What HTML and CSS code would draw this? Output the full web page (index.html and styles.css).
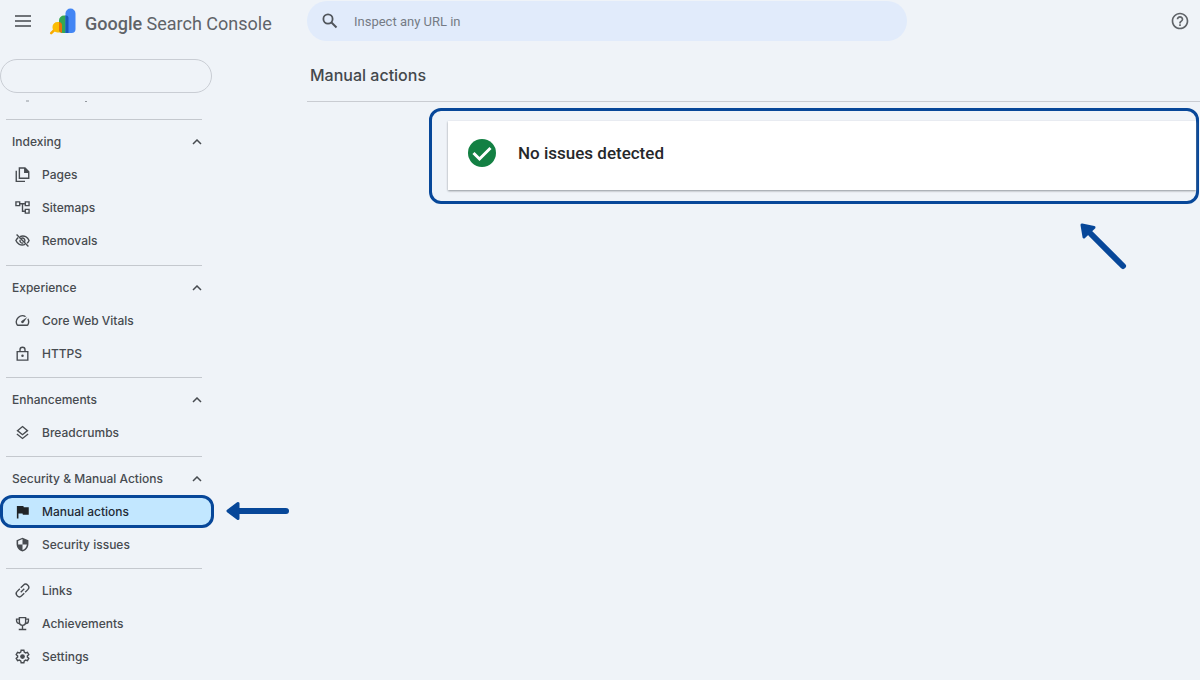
FILE: index.html
```html
<!DOCTYPE html>
<html lang="en">
<head>
<meta charset="utf-8">
<title>Google Search Console</title>
<link rel="stylesheet" href="styles.css">
</head>
<body>
<header class="topbar">
  <div class="brand">
    <button class="icon-button" aria-label="Main menu"><svg class="menu-icon" viewBox="0 0 16 12"><path d="M0 1h16M0 6h16M0 11h16" stroke="#45494d" stroke-width="1.700"/></svg></button>
    <svg class="logo" viewBox="0 0 28 28">
      <path d="M2.200 25.200L8 19.500" stroke="#f9ab00" stroke-width="2.500" stroke-linecap="round"/>
      <path d="M3.500 19a5 5 0 0 1 5-5H13V24.500H8.500a5 5 0 0 1-5-5z" fill="#fbbc04"/>
      <path d="M10 12.500A5 5 0 0 1 15 7.500h3V25h-4a4 4 0 0 1-4-4z" fill="#34a853"/>
      <path d="M10 14c1.800 0 3 1.500 3 3.500v7.400a4 4 0 0 1-3-3.900z" fill="#e8710a"/>
      <path d="M16.500 5.500a5 5 0 0 1 10 0V21a4 4 0 0 1-4 4h-6z" fill="#4285f4"/>
      <path d="M16.500 7.500H17a2.500 2.500 0 0 1 2.500 2.500v15h-3z" fill="#185abc"/>
    </svg>
    <span class="brand-name"><span class="brand-strong">Google</span> Search Console</span>
  </div>
  <label class="search">
    <svg class="search-icon" viewBox="0 0 16 16"><circle cx="6" cy="6" r="4.600" fill="none" stroke="#50555b" stroke-width="1.800"/><path d="M9.500 9.500l5 5" stroke="#50555b" stroke-width="2"/></svg>
    <input class="search-input" type="text" placeholder="Inspect any URL in" aria-label="Inspect any URL">
  </label>
  <button class="icon-button help" aria-label="Help"><svg class="help-icon" viewBox="0 0 24 24"><path fill="#5f6368" d="M11 18h2v-2h-2v2zm1-16C6.480 2 2 6.480 2 12s4.480 10 10 10 10-4.480 10-10S17.520 2 12 2zm0 18c-4.410 0-8-3.590-8-8s3.590-8 8-8 8 3.590 8 8-3.590 8-8 8zm0-14c-2.210 0-4 1.790-4 4h2c0-1.100.9-2 2-2s2 .9 2 2c0 2-3 1.750-3 5h2c0-2.250 3-2.500 3-5 0-2.210-1.790-4-4-4z"/></svg></button>
</header>
<div class="layout">
  <nav class="sidebar" aria-label="Reports">
    <button class="property" aria-label="Select property"></button>
    <svg class="scrolled-edge" viewBox="0 0 100 3" aria-hidden="true"><path d="M26 1h3M85 1.500h2" stroke="#92979d" stroke-width="1.200"/></svg>

    <section class="group">
      <button class="group-title">Indexing<svg class="chevron" viewBox="0 0 10 6"><path d="M1 5l4-4 4 4"/></svg></button>
      <a class="item" href="#"><svg class="icon" viewBox="0 0 24 24"><path class="line" d="M7 1.500h9l6 6V18H7zM2 6v17h14"/><path d="M14.500 1.500h2l5.500 5.500v2.500h-7.500z"/></svg>Pages</a>
      <a class="item" href="#"><svg class="icon" viewBox="0 0 24 24"><path class="line" d="M1.500 3h6v6h-6zM16.500 3h6v6h-6zM16.500 15h6v6h-6zM7.500 6h9M12 6v12h4.500"/></svg>Sitemaps</a>
      <a class="item" href="#"><svg class="icon" viewBox="0 0 24 24"><path class="line" d="M8 5.800C15 3 20.500 7 22.500 12c-.8 1.800-1.800 3.200-3.200 4.400M16 18.200C9 21 3.500 17 1.500 12c.8-1.800 1.800-3.200 3.500-4.600M2.500 2.500l19 19M10 8.600a4 4 0 0 1 5.500 5.200M8.100 11a4 4 0 0 0 5 5"/></svg>Removals</a>
    </section>

    <section class="group">
      <button class="group-title">Experience<svg class="chevron" viewBox="0 0 10 6"><path d="M1 5l4-4 4 4"/></svg></button>
      <a class="item" href="#"><svg class="icon" viewBox="1 1 22 22"><path d="M20.380 8.570l-1.230 1.850a8 8 0 0 1-.22 7.580H5.070A8 8 0 0 1 15.580 6.850l1.850-1.230A10 10 0 0 0 3.350 19a2 2 0 0 0 1.720 1h13.850a2 2 0 0 0 1.740-1 10 10 0 0 0-.27-10.440zm-9.790 6.840a2 2 0 0 0 2.830 0l5.660-8.490-8.490 5.660a2 2 0 0 0 0 2.830z"/></svg>Core Web Vitals</a>
      <a class="item" href="#"><svg class="icon" viewBox="0 0 24 24"><path class="line" d="M3.500 9h17v13.500h-17zM8 9V6a4 4 0 0 1 8 0v3"/><circle cx="12" cy="15.500" r="2"/></svg>HTTPS</a>
    </section>

    <section class="group">
      <button class="group-title">Enhancements<svg class="chevron" viewBox="0 0 10 6"><path d="M1 5l4-4 4 4"/></svg></button>
      <a class="item" href="#"><svg class="icon" viewBox="0 0 24 24"><path class="line" d="M12 2.500l8 6.500-8 6.500L4 9zM3 14.500l9 7 9-7"/></svg>Breadcrumbs</a>
    </section>

    <section class="group">
      <button class="group-title">Security &amp; Manual Actions<svg class="chevron" viewBox="0 0 10 6"><path d="M1 5l4-4 4 4"/></svg></button>
      <a class="item current" href="#" aria-current="page"><svg class="icon" viewBox="0 0 24 24"><path d="M14 5l-.6-2H3v20h2.500v-8H12l.6 2H22V5z"/></svg>Manual actions<svg class="arrow arrow-left" viewBox="0 0 64 20"><path d="M12 10h48" stroke="#074799" stroke-width="6" stroke-linecap="round"/><path d="M2 10L12 2.500v15z" fill="#074799" stroke="#074799" stroke-width="3" stroke-linejoin="round"/></svg></a>
      <a class="item" href="#"><svg class="icon" viewBox="0 0 24 24"><path d="M12 1L2.500 5v6c0 5.550 4 10.740 9.500 12 5.500-1.260 9.500-6.450 9.500-12V5L12 1zm0 11h7c-.53 4.120-3.280 7.790-7 8.940V12H5V6.300l7-3.110V12z"/></svg>Security issues</a>
    </section>

    <section class="group">
      <a class="item" href="#"><svg class="icon" viewBox="0 0 24 24"><g transform="rotate(-45 12 12)"><path class="line" d="M11 7H5a5 5 0 0 0 0 10h6M13 7h6a5 5 0 0 1 0 10h-6M8 12h8"/></g></svg>Links</a>
      <a class="item" href="#"><svg class="icon" viewBox="0 0 24 24"><path class="line" d="M7 2.500h10V10a5 5 0 0 1-10 0zM7 5H2.500v2.500A4.500 4.500 0 0 0 7 12M17 5h4.500v2.500A4.500 4.500 0 0 1 17 12M12 15v6M6 21.500h12"/></svg>Achievements</a>
      <a class="item" href="#"><svg class="icon" viewBox="0 0 24 24"><path class="line" d="M9.800 2h4.400l.6 3 2.200 1.300 2.900-1 2.200 3.800-2.300 2v1.800l2.300 2-2.200 3.800-2.900-1-2.200 1.300-.6 3H9.800l-.6-3L7 17.700l-2.900 1-2.200-3.800 2.300-2v-1.800l-2.300-2 2.200-3.800 2.900 1L9.200 5z"/><circle cx="12" cy="12" r="3.800"/></svg>Settings</a>
    </section>
  </nav>

  <main class="content">
    <h1 class="page-title">Manual actions</h1>
    <div class="callout">
      <div class="card">
        <svg class="check" viewBox="0 0 28 28"><circle cx="14" cy="14" r="14" fill="#138043"/><path d="M5.500 14l6 6L22.500 9" fill="none" stroke="#fff" stroke-width="3"/></svg>
        <p class="status">No issues detected</p>
      </div>
      <svg class="arrow arrow-up" viewBox="0 0 48 48"><path d="M12 12l32 32" stroke="#074799" stroke-width="6" stroke-linecap="round"/><path d="M3 3l12 2.500L5 15z" fill="#074799" stroke="#074799" stroke-width="3" stroke-linejoin="round"/></svg>
    </div>
  </main>
</div>
</body>
</html>
```
FILE: styles.css
```css
* { box-sizing: border-box; }
body {
  margin: 0;
  background: #eff3f8;
  color: #474b50;
  font-family: Inter, "Liberation Sans", sans-serif;
  font-size: 12px;
  overflow-x: hidden;
}
button { font: inherit; color: inherit; background: none; border: 0; padding: 0; }

.topbar {
  display: grid;
  grid-template-columns: 307px minmax(0, 600px) 1fr;
  align-items: center;
  height: 42px;
}
.brand { display: flex; align-items: center; padding-left: 15px; }
.icon-button { display: flex; }
.menu-icon { width: 16px; height: 12px; }
.logo { width: 28px; height: 28px; margin: 2px 0 0 18px; }
.brand-name {
  margin: 5px 0 0 8px;
  font: 400 18px Roboto, sans-serif;
  color: #5f6368;
  white-space: nowrap;
}
.brand-strong { font-weight: 500; }
.search {
  display: flex;
  align-items: center;
  gap: 16px;
  height: 40px;
  padding: 0 15px;
  border-radius: 20px;
  background: #e1ebfb;
}
.search-icon { width: 16px; height: 16px; }
.search-input {
  flex: 1;
  min-width: 0;
  border: 0;
  padding: 0;
  background: none;
  font: 13px Roboto, sans-serif;
}
.search-input::placeholder { color: #757b85; opacity: 1; }
.help { justify-self: end; margin-right: 10px; }
.help-icon { width: 20px; height: 20px; }

.layout { display: grid; grid-template-columns: 307px 1fr; }
.sidebar { width: 214px; padding-top: 17px; }
.property {
  display: block;
  width: 212px;
  height: 34px;
  border: 1px solid #c9cdd4;
  border-radius: 17px;
}
.scrolled-edge { display: block; width: 100px; height: 3px; margin: 7px 0 16px; }

.group { position: relative; padding: 6px 0 7px; }
.scrolled-edge + .group { padding-bottom: 8px; }
.group::before {
  content: "";
  position: absolute;
  top: 0;
  left: 6px;
  right: 12px;
  border-top: 1px solid #c4c8ce;
}
.group-title {
  display: flex;
  align-items: center;
  justify-content: space-between;
  width: 100%;
  height: 33px;
  padding: 0 12px;
  font-weight: 500;
}
.chevron { width: 10px; height: 6px; fill: none; stroke: #474b50; stroke-width: 1.5; }
.item {
  position: relative;
  display: flex;
  align-items: center;
  gap: 12px;
  height: 33px;
  padding-left: 15px;
  color: inherit;
  font-weight: 500;
  text-decoration: none;
}
.icon { width: 15px; height: 15px; fill: #474b50; }
.line { fill: none; stroke: #474b50; stroke-width: 2.2; }
.current {
  padding-left: 12px;
  border: 3px solid #074799;
  border-radius: 12px;
  background: #c2e7ff;
  color: #1f2a35;
}
.current .icon { fill: #1f2326; }
.arrow { position: absolute; }
.arrow-left { left: 223px; top: 3px; width: 64px; height: 20px; }

.page-title {
  margin: 0;
  padding: 21px 3px 14px;
  border-bottom: 1px solid #c9ccd2;
  color: #44484c;
  font: 500 16px/24px Inter, sans-serif;
}
.callout {
  position: relative;
  margin: 6px 1px 0 122px;
  padding: 10px 0 11px 16px;
  border: 3px solid #074799;
  border-radius: 12px;
}
.card {
  display: flex;
  align-items: center;
  gap: 22px;
  min-height: 69px;
  padding: 0 20px 5px;
  background: #fff;
  box-shadow: 0 1px 2px #8f949a;
}
.check { width: 28px; height: 28px; }
.status { margin: 0; color: #26282b; font: 500 17px Roboto, sans-serif; }
.arrow-up { right: 69px; top: 111px; width: 48px; height: 48px; }
```
